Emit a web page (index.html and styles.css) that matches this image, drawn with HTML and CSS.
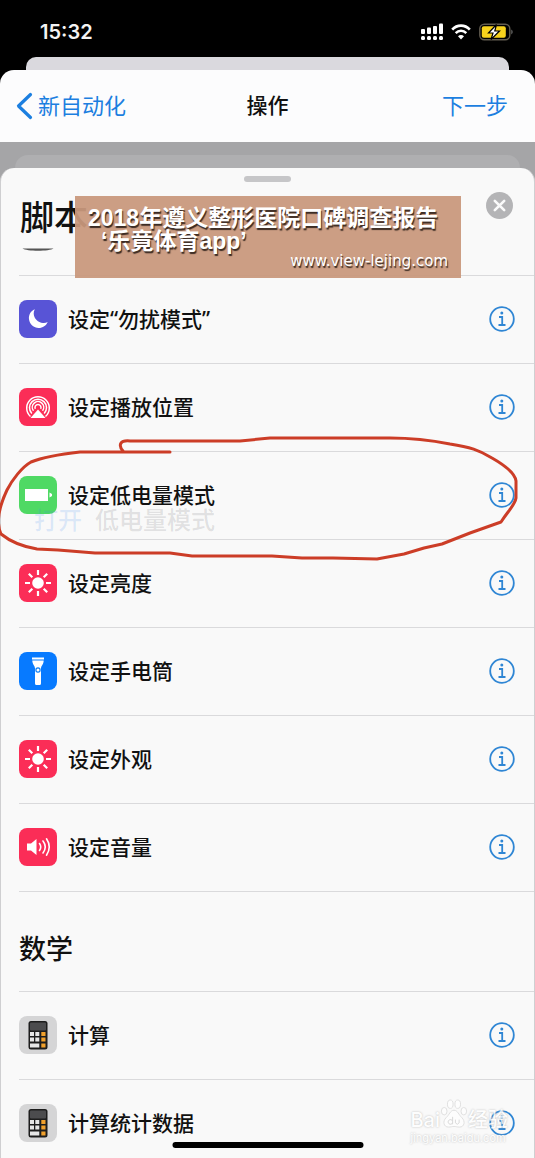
FILE: index.html
```html
<!DOCTYPE html>
<html lang="zh-CN">
<head>
<meta charset="utf-8">
<meta name="viewport" content="width=device-width, initial-scale=1">
<title>操作</title>
<link rel="stylesheet" href="styles.css">
</head>
<body>
<svg class="defs" aria-hidden="true">
  <symbol id="info" viewBox="0 0 26 26">
    <circle cx="13" cy="13" r="11.8" fill="none" stroke="currentColor" stroke-width="1.8"/>
    <circle cx="12.8" cy="7" r="1.5" fill="currentColor"/>
    <path d="M10 11h3.200v8M9.500 19h7" fill="none" stroke="currentColor" stroke-width="1.800"/>
  </symbol>
  <symbol id="sun" viewBox="0 0 38 38">
    <circle cx="19" cy="19" r="5.800" fill="#fff"/>
    <path d="M19 6v5M19 27v5M6 19h5M27 19h5M9.800 9.800l3.500 3.500M24.700 24.700l3.500 3.500M9.800 28.200l3.500-3.500M24.700 13.300l3.500-3.500" stroke="#fff" stroke-width="2.200"/>
  </symbol>
  <symbol id="calc" viewBox="0 0 38 38">
    <rect x="9.500" y="5" width="19" height="28.500" rx="2.500" fill="#1d1d1d"/>
    <rect x="11" y="6.500" width="16" height="8" rx="1" fill="#4c4c4e"/>
    <path d="M11 16h4v4h-4zM16.300 16h4v4h-4zM11 21.600h4v4h-4zM16.300 21.600h4v4h-4zM11 27.400h9.300v4H11z" fill="#e6e6e6"/>
    <path d="M22.300 16h4.200v4h-4.200zM22.300 21.600h4.200v4h-4.200zM22.300 27.400h4.200v4h-4.200z" fill="#f0a02c"/>
  </symbol>
</svg>
<div class="screen">
  <header class="status">
    <span class="time">15:32</span>
    <div class="status-icons">
      <svg width="22" height="18" viewBox="0 0 22 18" fill="#fff" aria-hidden="true">
        <rect x="0" y="6" width="4" height="5" rx="1"/><rect x="6" y="4.500" width="4" height="6.500" rx="1"/><rect x="12" y="3" width="4" height="8" rx="1"/><rect x="18" y="0.500" width="4" height="10.500" rx="1"/>
        <rect x="0" y="13" width="4" height="4" rx="1.500"/><rect x="6" y="13" width="4" height="4" rx="1.500"/><rect x="12" y="13" width="4" height="4" rx="1.500"/><rect x="18" y="13" width="4" height="4" rx="1.500"/>
      </svg>
      <svg width="20" height="18" viewBox="0 0 20 18" fill="none" stroke="#fff" aria-hidden="true">
        <path d="M1.200 6.700C6 1.300 14 1.300 18.800 6.700" stroke-width="2.600"/>
        <path d="M4.700 10.200c3-3.200 7.600-3.200 10.600 0" stroke-width="2.500"/>
        <path d="M10 16.500l-3-3.300c1.700-1.600 4.300-1.600 6 0z" fill="#fff" stroke="none"/>
      </svg>
      <svg width="34" height="18" viewBox="0 0 34 18" aria-hidden="true">
        <rect x="0.800" y="1.200" width="30" height="15.600" rx="4.500" fill="none" stroke="#625c50" stroke-width="1.400"/>
        <rect x="2.800" y="3.200" width="24" height="11.600" rx="2" fill="#f8d21c"/>
        <path d="M32.400 6.600c1.600.8 1.600 4 0 4.800z" fill="#777"/>
        <path d="M17.500 1.500L9.500 10h4.500l-2 6.500L20.500 8h-4.700z" fill="#fff" stroke="#000" stroke-width="1.200"/>
      </svg>
    </div>
  </header>
  <div class="back-card"></div>
  <nav class="nav">
    <button class="link back" type="button">
      <svg width="17" height="28" viewBox="0 0 17 28" aria-hidden="true"><path d="M14.500 2.500L2.500 14l12 11.500" fill="none" stroke="currentColor" stroke-width="3.200" stroke-linecap="round" stroke-linejoin="round"/></svg>
      <span>新自动化</span>
    </button>
    <h1 class="title">操作</h1>
    <button class="link next" type="button">下一步</button>
  </nav>
  <div class="stage">
    <div class="dim-card"></div>
    <main class="sheet">
      <div class="sheet-head">
        <span class="grabber"></span>
        <h2 class="big-title">脚本</h2>
        <svg class="arc" viewBox="0 0 32 4" aria-hidden="true"><path d="M0.500.5h31c-4 3-27 3-31 0z" fill="#555"/></svg>
        <button class="close" type="button" aria-label="关闭">
          <svg width="27" height="27" viewBox="0 0 27 27" aria-hidden="true"><circle cx="13.500" cy="13.500" r="13.500" fill="#b4b4b6"/><path d="M8.800 8.800l9.400 9.400M18.200 8.800l-9.400 9.400" stroke="#fafafa" stroke-width="2.600" stroke-linecap="round"/></svg>
        </button>
        <aside class="banner">
          <p class="banner-title">2018年遵义整形医院口碑调查报告</p>
          <p class="banner-sub">‘乐竟体育app’</p>
          <p class="banner-url">www.view-lejing.com</p>
        </aside>
      </div>
      <ul class="list">
        <li class="row">
          <svg class="icon indigo" viewBox="0 0 38 38" aria-hidden="true"><path d="M15.800 9.200C11.600 11 9.500 15 10 19.300c.6 5 4.800 8.700 9.700 8.700 4 0 7.600-2.400 9-6-1.500.8-3 1-4.700.9-5-.3-9-4.300-9.300-9.200-.1-1.600.3-3.100 1.100-4.500z" fill="#fff"/></svg>
          <span class="label">设定“勿扰模式”</span>
          <button class="info" type="button" aria-label="信息"><svg viewBox="0 0 26 26"><use href="#info"/></svg></button>
        </li>
        <li class="row">
          <svg class="icon red" viewBox="0 0 38 38" aria-hidden="true">
            <g fill="none" stroke="#fff" stroke-width="1.500"><path d="M11.500 28.500A11.300 11.300 0 1 1 26.500 28.500"/><path d="M12.800 25.500A8.500 8.500 0 1 1 25.200 25.500"/><path d="M14.500 22.800A5.700 5.700 0 1 1 23.500 22.800"/><path d="M16.300 20.800A3 3 0 1 1 21.700 20.800"/></g>
            <path d="M19 21.500l7.500 8.500h-15z" fill="#fff"/>
          </svg>
          <span class="label">设定播放位置</span>
          <button class="info" type="button" aria-label="信息"><svg viewBox="0 0 26 26"><use href="#info"/></svg></button>
        </li>
        <li class="row marked">
          <svg class="icon green" viewBox="0 0 38 38" aria-hidden="true"><path d="M6 13h23v12H6zM30.500 16.500l2.500 1.500v2l-2.500 1.500z" fill="#fff"/></svg>
          <span class="label">设定低电量模式</span>
          <button class="info" type="button" aria-label="信息"><svg viewBox="0 0 26 26"><use href="#info"/></svg></button>
          <p class="ghost"><span class="ghost-verb">打开</span><span>低电量模式</span></p>
          <svg class="mark" viewBox="0 0 535 128" preserveAspectRatio="none" aria-hidden="true"><path d="M170 21H80C62 23 46 25 31 31 22 36 12 49 7 59-1 76-4 92 1 103 12 112 25 116 37 118L58 119 95 122H170L192 125H272L302 127H333L377 128 404 123 424 117 442 113 470 102 501 91C508 80 515 74 516 67V50C515 42 506 35 492 27 479 19 470 16 450 13 430 9 410 7 390 7H270L240 10H130C120 9 118 14 123 20"/></svg>
        </li>
        <li class="row">
          <svg class="icon red"><use href="#sun"/></svg>
          <span class="label">设定亮度</span>
          <button class="info" type="button" aria-label="信息"><svg viewBox="0 0 26 26"><use href="#info"/></svg></button>
        </li>
        <li class="row">
          <svg class="icon blue" viewBox="0 0 38 38" aria-hidden="true"><path d="M13 5.500h12v2H13zM13.300 8.500h11.400c0 4-2.700 5-2.700 8V31.500q0 1.500-1.500 1.500h-3q-1.500 0-1.500-1.500V16.500c0-3-2.700-4-2.700-8z" fill="#fff"/><circle cx="19" cy="18" r="2.100" fill="#fff" stroke="#0b7df5" stroke-width="1.200"/></svg>
          <span class="label">设定手电筒</span>
          <button class="info" type="button" aria-label="信息"><svg viewBox="0 0 26 26"><use href="#info"/></svg></button>
        </li>
        <li class="row">
          <svg class="icon red"><use href="#sun"/></svg>
          <span class="label">设定外观</span>
          <button class="info" type="button" aria-label="信息"><svg viewBox="0 0 26 26"><use href="#info"/></svg></button>
        </li>
        <li class="row">
          <svg class="icon red" viewBox="0 0 38 38" aria-hidden="true"><path d="M8 15.500h4l5.500-4.500v16l-5.500-4.500H8z" fill="#fff"/><g fill="none" stroke="#fff" stroke-width="1.600" stroke-linecap="round"><path d="M20.500 15.500q2.500 3.500 0 7"/><path d="M24 13q4.500 6 0 12"/><path d="M27.500 10.800q5.500 8.200 0 16.400"/></g></svg>
          <span class="label">设定音量</span>
          <button class="info" type="button" aria-label="信息"><svg viewBox="0 0 26 26"><use href="#info"/></svg></button>
        </li>
      </ul>
      <h2 class="section">数学</h2>
      <ul class="list">
        <li class="row">
          <svg class="icon gray"><use href="#calc"/></svg>
          <span class="label">计算</span>
          <button class="info" type="button" aria-label="信息"><svg viewBox="0 0 26 26"><use href="#info"/></svg></button>
        </li>
        <li class="row last">
          <svg class="icon gray"><use href="#calc"/></svg>
          <span class="label">计算统计数据</span>
          <button class="info" type="button" aria-label="信息"><svg viewBox="0 0 26 26"><use href="#info"/></svg></button>
          <div class="watermark">
            <div class="wm-brand">
              <span>Bai</span>
              <svg width="28" height="32" viewBox="0 0 30 32" fill="#fff" stroke="#d8d8d8" aria-hidden="true"><ellipse cx="4.500" cy="13" rx="3" ry="4"/><ellipse cx="11" cy="5.500" rx="3" ry="4.500"/><ellipse cx="19" cy="5.500" rx="3" ry="4.500"/><ellipse cx="25.500" cy="13" rx="3" ry="4"/><path d="M15 12c4 0 5 5 8.500 8 4 4 2.500 10-2.500 10-3 0-4-.7-6-.7S12 30 9 30c-5 0-6.500-6-2.500-10C10 17 11 12 15 12z"/><path d="M13.500 19v8M13.500 23.500a2.500 2.500 0 1 0 0 2M16.500 22v3.500q2 3 4 0V22" fill="none" stroke="#d0d0d0"/></svg>
              <span>经验</span>
            </div>
            <div class="wm-url">jingyan.baidu.com</div>
          </div>
        </li>
      </ul>
      <div class="home"></div>
    </main>
  </div>
</div>
</body>
</html>
```
FILE: styles.css
```css
* {
  box-sizing: border-box;
  margin: 0;
  padding: 0;
}

body {
  background: #000;
  color: #111;
  font-family: Inter, "Noto Sans CJK SC", sans-serif;
}

button {
  border: 0;
  background: none;
  font: inherit;
}

.defs {
  position: absolute;
  width: 0;
  height: 0;
}

.status {
  display: flex;
  align-items: center;
  justify-content: space-between;
  padding: 20px 22px 13px 40px;
}

.time {
  color: #f4f4f4;
  font-size: 20px;
  font-weight: 600;
  line-height: 24px;
}

.status-icons {
  display: flex;
  align-items: center;
  gap: 8px;
}

.back-card {
  height: 13px;
  margin: 0 26px;
  border-radius: 10px 10px 0 0;
  background: #dad9de;
}

.nav {
  display: grid;
  grid-template-columns: 1fr auto 1fr;
  align-items: center;
  height: 72px;
  padding: 0 27px;
  border-radius: 14px 14px 0 0;
  background: #fcfcfd;
}

.link {
  color: #1c7fe0;
  font-size: 22px;
  line-height: 32px;
}

.back {
  display: flex;
  align-items: center;
  justify-self: start;
  gap: 5px;
  margin-left: -11px;
}

.next {
  justify-self: end;
}

.title {
  font-size: 21px;
  font-weight: 500;
  line-height: 32px;
}

.stage {
  padding-top: 13px;
  background: #a5a5a7;
}

.dim-card {
  height: 13px;
  margin: 0 15px;
  border-radius: 14px 14px 0 0;
  background: #afafb1;
}

.sheet {
  position: relative;
  border: 1px solid #cfcfd1;
  border-top: 0;
  border-radius: 14px 14px 0 0;
  background: #f9f9f9;
}

.sheet-head {
  position: relative;
  display: flex;
  flex-direction: column;
  height: 107px;
  padding: 8px 19px 0;
}

.grabber {
  align-self: center;
  width: 47px;
  height: 6px;
  border-radius: 3px;
  background: #c6c6c8;
}

.big-title {
  margin-top: 12px;
  font-size: 34px;
  font-weight: 500;
  line-height: 48px;
}

.arc {
  width: 32px;
  height: 4px;
  margin: 6px 0 0 2px;
}

.close {
  position: absolute;
  top: 24px;
  right: 21px;
  width: 27px;
  height: 27px;
}

.close svg {
  display: block;
}

.banner {
  position: absolute;
  z-index: 2;
  top: 28px;
  left: 74px;
  width: 386px;
  height: 82px;
  padding: 11px 13px 0;
  background: rgba(201, 152, 124, 0.94);
  color: #fff;
  text-shadow: 1px 2px 1px #3a2a22;
  white-space: nowrap;
}

.banner-title,
.banner-sub {
  font-family: "Liberation Sans", "Noto Sans CJK SC", sans-serif;
  font-size: 23px;
  font-weight: 700;
  line-height: 23px;
}

.banner-sub {
  padding-left: 13px;
}

.banner-url {
  font-family: "DejaVu Sans", sans-serif;
  font-size: 15px;
  line-height: 16px;
  text-align: right;
}

.list {
  padding-left: 18px;
  list-style: none;
}

.row {
  display: flex;
  align-items: center;
  gap: 11px;
  padding: 24px 19px 25px 0;
  border-top: 1px solid #dadadc;
}

.icon {
  flex: none;
  width: 38px;
  height: 38px;
  border-radius: 8px;
}

.indigo { background: #5854d6; }
.red { background: #fb2d57; }
.green { background: #4fd964; }
.blue { background: #077aff; }
.gray { background: #d5d5d6; }

.label {
  flex: 1;
  font-family: "Noto Sans", "Noto Sans CJK SC", sans-serif;
  font-size: 21px;
  font-weight: 500;
  line-height: 32px;
}

.info {
  width: 26px;
  height: 26px;
  color: #2f86d4;
}

.info svg {
  display: block;
}

.marked {
  position: relative;
}

.ghost {
  position: absolute;
  top: 53px;
  left: 15px;
  display: flex;
  gap: 13px;
  color: rgba(60, 60, 70, 0.14);
  font-size: 24px;
  font-weight: 500;
  line-height: 32px;
}

.ghost-verb {
  color: rgba(60, 140, 240, 0.16);
}

.mark {
  position: absolute;
  z-index: 1;
  top: -21px;
  left: -19px;
  width: calc(100% + 20px);
  height: 128px;
  overflow: visible;
}

.mark path {
  fill: none;
  stroke: #cc3d27;
  stroke-width: 3;
  stroke-linecap: round;
  stroke-linejoin: round;
}

.section {
  margin-left: 18px;
  padding: 38px 0 21px;
  border-top: 1px solid #dadadc;
  font-size: 27px;
  font-weight: 500;
  line-height: 40px;
}

.last {
  position: relative;
  padding-bottom: 16px;
}

.watermark {
  position: absolute;
  top: 24px;
  right: 26px;
  color: #fff;
  opacity: 0.8;
  text-shadow: 0 0 2px #aaa;
}

.wm-brand {
  display: flex;
  align-items: center;
  font-size: 20px;
  font-weight: 500;
  line-height: 32px;
}

.wm-brand svg {
  margin-top: -12px;
}

.wm-url {
  margin-top: -4px;
  font-size: 11px;
  line-height: 12px;
}

.home {
  position: absolute;
  bottom: 10px;
  left: 50%;
  width: 191px;
  height: 6px;
  border-radius: 3px;
  background: #000;
  transform: translateX(-50%);
}
```
